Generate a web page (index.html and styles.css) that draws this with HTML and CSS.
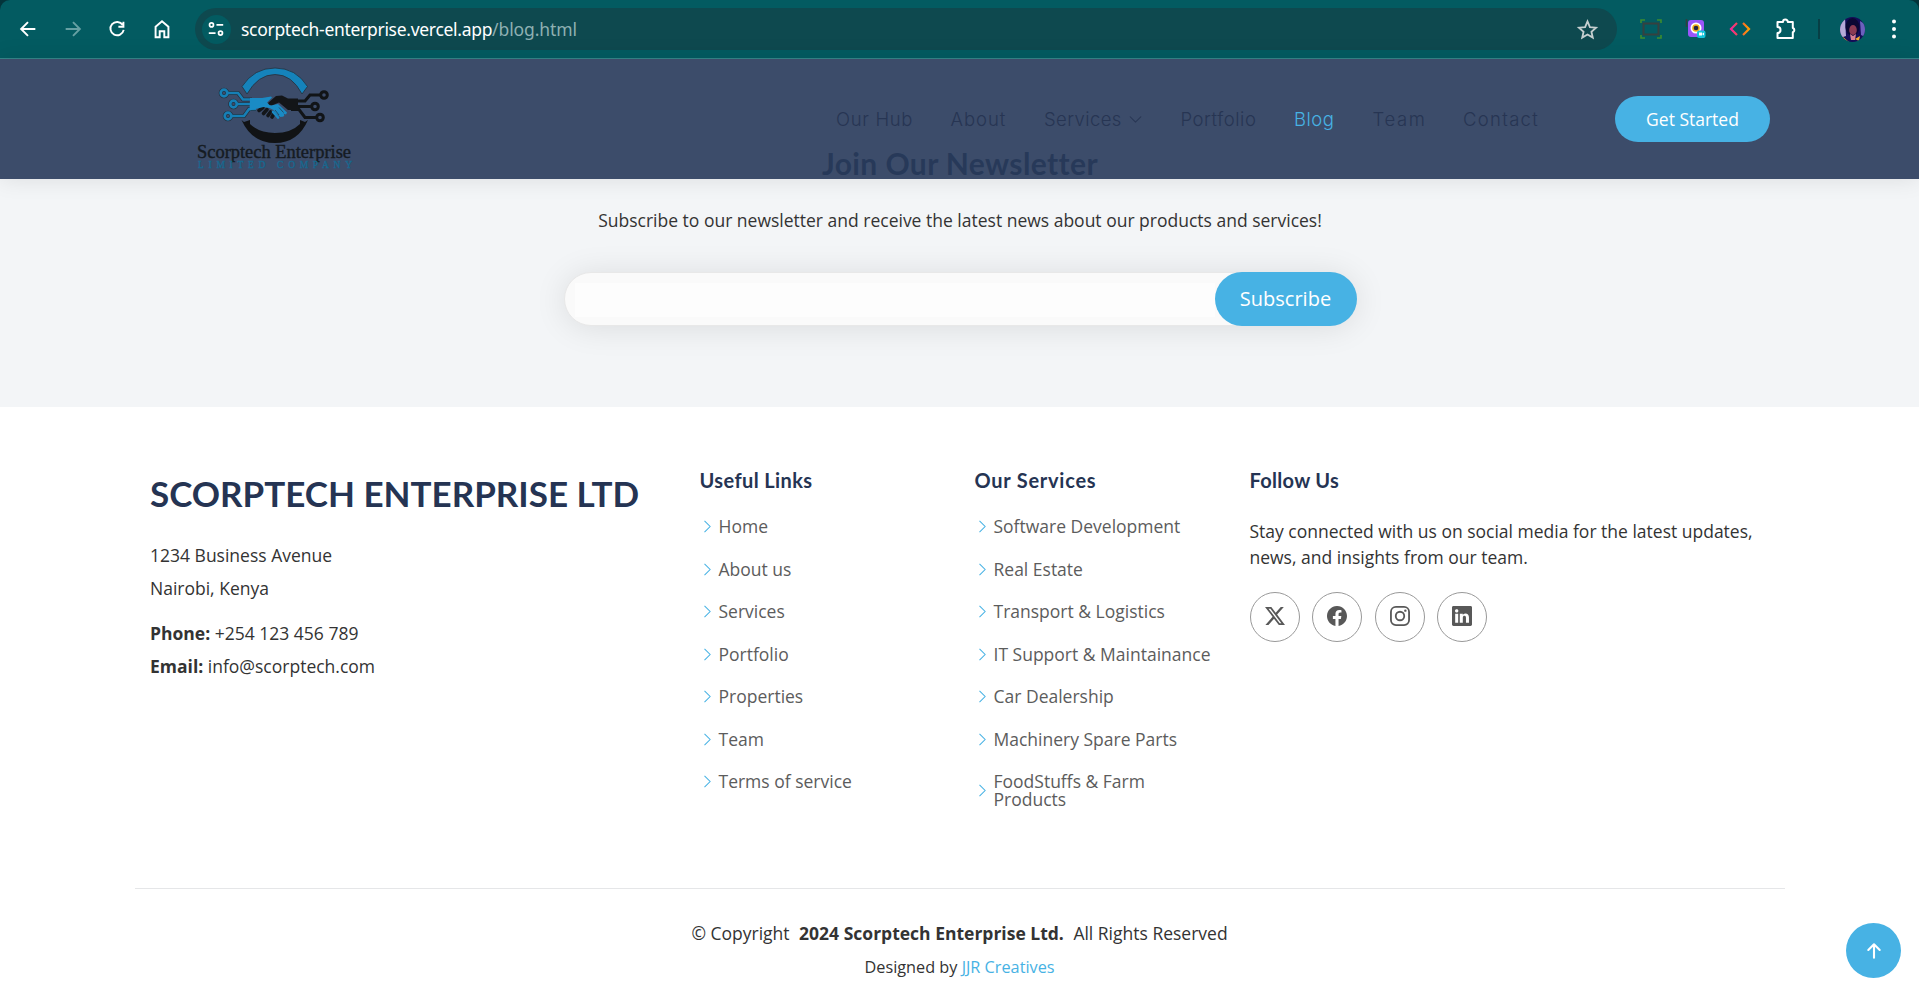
FILE: index.html
```html
<!DOCTYPE html>
<html lang="en">
<head>
<meta charset="utf-8">
<title>Scorptech Enterprise - Blog</title>
<link rel="stylesheet" href="styles.css">
</head>
<body>
<div class="browser">
  <div class="toolbar">
    <div class="nav-buttons">
      <svg viewBox="0 0 24 24"><path d="M20 12H5M12 4.500L4.500 12l7.500 7.500"/></svg>
      <svg class="dim" viewBox="0 0 24 24"><path d="M4 12h15M12 4.500l7.500 7.500-7.500 7.500"/></svg>
      <svg viewBox="0 0 24 24"><path d="M18.200 7.500A7.300 7.300 0 1 0 19.300 13M19 4v5.500h-5.500"/></svg>
      <svg viewBox="0 0 24 24"><path d="M5 9.500l7-6 7 6V21h-4.500v-6.500h-5V21H5z"/></svg>
    </div>
    <div class="omnibox">
      <span class="site-info"><svg viewBox="0 0 20 20"><circle cx="5" cy="5.500" r="2.200"/><path d="M10.500 5.500H18M2 14.500h7.500"/><circle cx="15" cy="14.500" r="2.200"/></svg></span>
      <span class="url">scorptech-enterprise.vercel.app</span><span class="path">/blog.html</span>
      <svg class="star" viewBox="0 0 24 24"><path d="M12 3.600l2.500 5.900 6.400.6-4.800 4.200 1.400 6.200L12 17.200l-5.500 3.300 1.400-6.200-4.800-4.200 6.400-.6z"/></svg>
    </div>
    <div class="extensions">
      <svg class="ext-frame" viewBox="0 0 22 22"><rect x="3.500" y="5.500" width="15" height="11" fill="none" stroke="#36413f" stroke-width="2"/><path d="M1 5V2h4M17 2h4v3M21 17v3h-4M5 20H1v-3" fill="none" stroke="#3e8d2f" stroke-width="1.600"/></svg>
      <svg class="ext-cam" viewBox="0 0 22 22"><path d="M1.500 1v8" stroke="#333c40" stroke-width="1.500"/><rect x="3" y="2" width="16" height="17" rx="3" fill="#9a56fa"/><circle cx="11" cy="10" r="5.500" fill="#fff"/><circle cx="11" cy="10" r="3.800" fill="#efac16"/><circle cx="11" cy="10" r="2.300" fill="#232443"/><rect x="12" y="12.500" width="8.500" height="7.500" rx="2" fill="#12c5dc"/><path d="M14 14.500h3v3h-3zM17 16l2-1.500v3z" fill="#fff"/></svg>
      <svg class="ext-code" viewBox="0 0 22 22"><defs><linearGradient id="codeFill"><stop offset="0" stop-color="#f5269a"/><stop offset=".5" stop-color="#f85238"/><stop offset="1" stop-color="#ff9f00"/></linearGradient></defs><path d="M8 5l-6 6 6 6M14 5l6 6-6 6" fill="none" stroke="url(#codeFill)" stroke-width="2.200"/></svg>
      <svg class="ext-puzzle" viewBox="0 0 22 22"><path d="M2.500 4H8a2.400 2.400 0 0 1 4.800 0h5v6a2.200 2.200 0 0 1 0 4.200V20H2.500v-5a3 3 0 0 0 0-6z" fill="none" stroke="#fff" stroke-width="2" stroke-linejoin="round"/></svg>
      <span class="divider"></span>
      <svg class="avatar" viewBox="0 0 25 25"><defs><clipPath id="face"><circle cx="12.500" cy="12.500" r="12.500"/></clipPath></defs><g clip-path="url(#face)"><rect width="25" height="25" fill="#150c58"/><path d="M0 5l5-4 1 18-6 2z" fill="#b6a9d8"/><path d="M20 4l5 3v13l-4-2z" fill="#6c61bd"/><ellipse cx="12.500" cy="10" rx="7" ry="9" fill="#0b0734"/><ellipse cx="13" cy="13" rx="3.800" ry="5" fill="#8c3a54"/><path d="M10 17l3 2 3-2-1 6h-4z" fill="#da7e93"/><path d="M3 20l6 5H4zM15 22l5-3-1 5z" fill="#f5aa31"/></g></svg>
      <svg class="dots" viewBox="0 0 6 22"><circle cx="3" cy="3.500" r="2"/><circle cx="3" cy="11" r="2"/><circle cx="3" cy="18.500" r="2"/></svg>
    </div>
  </div>
</div>

<header class="header">
  <svg class="logo" viewBox="0 0 156 106">
    <path d="M45 20.500Q57 2 78 2T110.500 20.500L105 28Q95 8.500 78 8.500T50 28z" fill="#1583bb" stroke="#24303c" stroke-width=".8"/>
    <path d="M44.500 54l2.500 2 6-2v4Q62 67 78 67T103 58v-4l5 2 3-2Q101 77 78 77T44.500 54z" fill="#111315"/>
    <g fill="none" stroke="#24303c" stroke-width="4">
      <circle cx="27" cy="27" r="3.300"/><circle cx="36.500" cy="38" r="3.300"/><circle cx="31" cy="50" r="3.300"/>
      <path d="M31 27h10l5 6.500h9M41 38h14M35 50h12l5-7h7"/>
    </g>
    <g fill="none" stroke="#167fb6" stroke-width="2.700">
      <circle cx="27" cy="27" r="3.300"/><circle cx="36.500" cy="38" r="3.300"/><circle cx="31" cy="50" r="3.300"/>
      <path d="M31 27h10l5 6.500h9M41 38h14M35 50h12l5-7h7"/>
    </g>
    <g fill="none" stroke="#111417" stroke-width="3">
      <circle cx="127" cy="29" r="3.300"/><circle cx="118" cy="40.500" r="3.300"/><circle cx="123" cy="51.500" r="3.300"/>
      <path d="M123 29h-10l-5 6h-9M114 40.500H99M119 51.500h-11l-6-8h-8"/>
    </g>
    <path d="M62 44.500l4-3M66.500 47.500l3.500-4M71 49.500l2.500-3.500M75 51l1.500-2.500" fill="none" stroke="#131619" stroke-width="3.600" stroke-linecap="round"/>
    <path d="M53 32h12l9-1.500 1 1-5 5 3 3 8-1.500 9 8.500-1 2-3-1 .5 3-3 .5-5-4-2-3-4-2-6-1-8 2-6 1.500z" fill="#1a8bc5"/>
    <path d="M76 46l5 5.500M82 44l4 5" fill="none" stroke="#1a8bc5" stroke-width="2.600" stroke-linecap="round"/>
    <path d="M78 44l4 5M82 41.500l4.500 5" stroke="#20465f" stroke-width=".9"/>
    <path d="M101 32.500v11.500h-10l-9-7.500-6 2.500q-4 1-5-2l8-7 6-.5 6 3z" fill="#131518"/>
    <text class="logo-name" x="0" y="91.500" textLength="154" lengthAdjust="spacingAndGlyphs">Scorptech Enterprise</text>
    <text class="logo-sub" x="1" y="102" textLength="154">LIMITED COMPANY</text>
  </svg>
  <nav class="menu">
    <a class="w-hub">Our Hub</a><a class="w-about">About</a><a class="w-services">Services<svg viewBox="0 0 16 16"><path d="M2 4.800l6 6 6-6"/></svg></a><a class="w-portfolio">Portfolio</a><a class="w-blog active">Blog</a><a class="w-team">Team</a><a class="w-contact">Contact</a>
  </nav>
  <a class="get-started">Get Started</a>
</header>

<section class="newsletter">
  <h4>Join Our Newsletter</h4>
  <p>Subscribe to our newsletter and receive the latest news about our products and services!</p>
  <form class="subscribe"><span class="field"></span><span class="submit">Subscribe</span></form>
</section>

<footer class="footer">
  <div class="columns">
    <div class="about">
      <div class="sitename"><span>SCORPTECH ENTERPRISE LTD</span></div>
      <p>1234 Business Avenue</p>
      <p>Nairobi, Kenya</p>
      <p class="phone"><strong>Phone:</strong> +254 123 456 789</p>
      <p><strong>Email:</strong> info@scorptech.com</p>
    </div>
    <div class="links">
      <h4 class="h-links">Useful Links</h4>
      <ul>
        <li><svg viewBox="0 0 16 16"><path d="M4.800 2l6 6-6 6"/></svg><a>Home</a></li>
        <li><svg viewBox="0 0 16 16"><path d="M4.800 2l6 6-6 6"/></svg><a>About us</a></li>
        <li><svg viewBox="0 0 16 16"><path d="M4.800 2l6 6-6 6"/></svg><a>Services</a></li>
        <li><svg viewBox="0 0 16 16"><path d="M4.800 2l6 6-6 6"/></svg><a>Portfolio</a></li>
        <li><svg viewBox="0 0 16 16"><path d="M4.800 2l6 6-6 6"/></svg><a>Properties</a></li>
        <li><svg viewBox="0 0 16 16"><path d="M4.800 2l6 6-6 6"/></svg><a>Team</a></li>
        <li><svg viewBox="0 0 16 16"><path d="M4.800 2l6 6-6 6"/></svg><a>Terms of service</a></li>
      </ul>
    </div>
    <div class="links">
      <h4 class="h-services">Our Services</h4>
      <ul>
        <li><svg viewBox="0 0 16 16"><path d="M4.800 2l6 6-6 6"/></svg><a>Software Development</a></li>
        <li><svg viewBox="0 0 16 16"><path d="M4.800 2l6 6-6 6"/></svg><a>Real Estate</a></li>
        <li><svg viewBox="0 0 16 16"><path d="M4.800 2l6 6-6 6"/></svg><a>Transport &amp; Logistics</a></li>
        <li><svg viewBox="0 0 16 16"><path d="M4.800 2l6 6-6 6"/></svg><a>IT Support &amp; Maintainance</a></li>
        <li><svg viewBox="0 0 16 16"><path d="M4.800 2l6 6-6 6"/></svg><a>Car Dealership</a></li>
        <li><svg viewBox="0 0 16 16"><path d="M4.800 2l6 6-6 6"/></svg><a>Machinery Spare Parts</a></li>
        <li><svg viewBox="0 0 16 16"><path d="M4.800 2l6 6-6 6"/></svg><a>FoodStuffs &amp; Farm<br>Products</a></li>
      </ul>
    </div>
    <div class="follow">
      <h4 class="h-follow">Follow Us</h4>
      <p>Stay connected with us on social media for the latest updates,<br>news, and insights from our team.</p>
      <div class="social">
        <a><svg viewBox="0 0 16 16"><path d="M12.600.75h2.454l-5.360 6.142L16 15.250h-4.937l-3.867-5.070-4.425 5.070H.316l5.733-6.570L0 .75h5.063l3.495 4.633L12.601.75Zm-.86 13.028h1.360L4.323 2.145H2.865z"/></svg></a>
        <a><svg viewBox="0 0 16 16"><path d="M16 8.049c0-4.446-3.582-8.050-8-8.050C3.580 0-.002 3.603-.002 8.050c0 4.017 2.926 7.347 6.750 7.951v-5.625h-2.030V8.050H6.750V6.275c0-2.017 1.195-3.131 3.022-3.131.876 0 1.791.157 1.791.157v1.980h-1.009c-.993 0-1.303.621-1.303 1.258v1.510h2.218l-.354 2.326H9.250V16c3.824-.604 6.750-3.934 6.750-7.951"/></svg></a>
        <a><svg viewBox="0 0 16 16"><rect x=".75" y=".75" width="14.500" height="14.500" rx="4" fill="none" stroke="#585858" stroke-width="1.450"/><circle cx="8" cy="8" r="3.400" fill="none" stroke="#585858" stroke-width="1.450"/><circle cx="12.270" cy="3.730" r=".96"/></svg></a>
        <a><svg viewBox="0 0 16 16"><path fill-rule="evenodd" d="M0 1.146C0 .513.526 0 1.175 0h13.650C15.474 0 16 .513 16 1.146v13.708c0 .633-.526 1.146-1.175 1.146H1.175C.526 16 0 15.487 0 14.854zm4.943 12.248V6.169H2.542v7.225zm-1.200-8.212c.837 0 1.358-.554 1.358-1.248-.015-.709-.520-1.248-1.342-1.248S2.400 3.225 2.400 3.934c0 .694.521 1.248 1.327 1.248zm4.908 8.212V9.359c0-.216.016-.432.080-.586.173-.431.568-.878 1.232-.878.869 0 1.216.662 1.216 1.634v3.865h2.401V9.250c0-2.220-1.184-3.252-2.764-3.252-1.274 0-1.845.7-2.165 1.193v.025h-.016l.016-.025V6.169h-2.400c.030.678 0 7.225 0 7.225z"/></svg></a>
      </div>
    </div>
  </div>
  <div class="copyright">
    <p>© Copyright <strong>2024 Scorptech Enterprise Ltd.</strong> <span>All Rights Reserved</span></p>
    <div class="credits">Designed by <a>JJR Creatives</a></div>
  </div>
</footer>
<a class="scroll-top"><svg viewBox="0 0 16 16"><path d="M8 12.500V3.700M4.200 7.300L8 3.500l3.800 3.800"/></svg></a>
</body>
</html>
```
FILE: styles.css
```css
* { box-sizing: border-box; }
body { margin: 0; height: 996px; overflow: hidden; background: #fff; color: #333; font: 17.5px/26.25px "Open Sans", sans-serif; }
h4, p, ul { margin: 0; padding: 0; }
svg { display: block; }

.browser { height: 59px; background: #04343a; }
.toolbar { display: flex; align-items: center; height: 59px; padding: 0 22px 0 17px; background: #035b61; border-bottom: 1px solid #36868a; border-radius: 10px 10px 0 0; }
.nav-buttons { display: flex; gap: 22.700px; width: 178px; }
.nav-buttons svg { width: 22px; height: 22px; fill: none; stroke: #fff; stroke-width: 2.100; }
.nav-buttons .dim { stroke: #66a0a3; }
.omnibox { display: flex; align-items: center; width: 1422px; height: 42px; padding: 0 18px 0 6.500px; border-radius: 21px; background: #0e494f; font: 17.5px/24px "Noto Sans", sans-serif; color: #fff; }
.site-info { display: flex; align-items: center; justify-content: center; width: 29px; height: 29px; margin-right: 10.500px; border-radius: 50%; background: #035b61; }
.site-info svg { width: 18px; height: 18px; fill: none; stroke: #fff; stroke-width: 1.900; }
.url { letter-spacing: -0.3px; }
.path { color: #8eb0b2; letter-spacing: -0.1px; }
.star { width: 23px; height: 23px; margin-left: auto; fill: none; stroke: #c5cfd0; stroke-width: 1.900; }
.extensions { display: flex; align-items: center; flex: 1; padding-left: 23px; }
.extensions svg { flex: none; width: 22px; height: 22px; }
.ext-cam { margin-left: 23px; }
.ext-code { margin-left: 22px; }
.ext-puzzle { margin-left: 24px; }
.divider { width: 2px; height: 20px; margin-left: 21px; background: #073f45; }
.extensions .avatar { width: 25px; height: 25px; margin-left: 20px; }
.extensions .dots { width: 6px; margin-left: auto; fill: #fff; }

.header { position: relative; z-index: 2; display: flex; align-items: center; height: 120px; padding-left: 197px; background: rgba(40, 58, 90, .9); box-shadow: 0 0 22px rgba(0, 0, 0, .1); }
.logo { flex: none; width: 156px; height: 106px; }
.logo-name { font: 18px "Liberation Serif", serif; fill: #151b22; stroke: #151b22; stroke-width: .4px; }
.logo-sub { font: 9.500px "Liberation Serif", serif; fill: #176990; stroke: #176990; stroke-width: .3px; }
.menu { display: flex; gap: 37.500px; margin-left: 483px; }
.menu a { display: flex; align-items: center; flex: none; color: #273553; font: 300 18.500px/26px Inter, sans-serif; white-space: nowrap; }
.menu svg { width: 15px; height: 15px; margin-left: 6px; fill: none; stroke: #273553; stroke-width: 1.100; }
.menu .active { color: #47b2e4; }
.w-hub { width: 77px; letter-spacing: .65px; }
.w-about { width: 56px; letter-spacing: .95px; }
.w-services { width: 99px; letter-spacing: .4px; }
.w-portfolio { width: 76px; letter-spacing: .55px; }
.w-blog { width: 41px; letter-spacing: .5px; }
.w-team { width: 53px; letter-spacing: 1.6px; }
.w-contact { width: 77px; letter-spacing: 1.300px; }
.get-started { display: flex; align-items: center; justify-content: center; width: 155px; height: 46px; margin-left: 75px; border-radius: 23px; background: #47b2e4; color: #fff; font-size: 17.5px; }

.newsletter { display: flex; flex-direction: column; align-items: center; height: 348px; margin-top: -120px; padding: 84px 0 0 1px; background: #f3f5f7; }
.newsletter h4 { height: 40px; font: bold 30px/40px Lato, sans-serif; letter-spacing: .4px; color: #253453; }
.newsletter p { margin-top: 24px; white-space: nowrap; }
.subscribe { display: flex; width: 793px; height: 54px; margin-top: 38.500px; padding: 10px 0 8px 10px; border-radius: 27px; background: #fafafa; box-shadow: 0 2px 32px rgba(0, 0, 0, .1); border: 1px solid #e8e8e8; }
.field { flex: 1; background: #fdfdfd; }
.submit { width: 142px; height: 54px; margin: -11px -1px -9px 0; border-radius: 27px; background: #47b2e4; color: #fff; font-size: 20px; line-height: 53px; text-align: center; }

.footer { display: flex; flex-direction: column; align-items: center; }
.columns { display: grid; grid-template-columns: 549.500px 275px 275px 519.500px; width: 1619px; height: 481px; padding: 60px 0 0; }
.columns h4 { height: 26px; font: bold 20px/26px Lato, sans-serif; color: #253453; }
.columns .h-links { letter-spacing: .4px; }
.columns .h-services { letter-spacing: .75px; }
.columns .h-follow { letter-spacing: .3px; }
.sitename { height: 50px; margin: 1px 0 21px; font: bold 35px/50px Lato, sans-serif; color: #253453; white-space: nowrap; }
.about p { height: 32.500px; line-height: 32.500px; }
.about .phone { margin-top: 13px; }
.links ul { padding-top: 25px; list-style: none; }
.links li { display: flex; align-items: center; margin-bottom: 25px; line-height: 17.5px; white-space: nowrap; color: #5c5c5c; }
.links svg { width: 15px; height: 15px; margin-right: 4px; fill: none; stroke: #47b2e4; stroke-width: 1.100; }
.follow p { padding-top: 25px; white-space: nowrap; }
.social { display: flex; gap: 12.500px; margin-top: 21px; }
.social a { display: flex; align-items: center; justify-content: center; width: 50px; height: 50px; padding-bottom: 2px; border: 1px solid #999; border-radius: 50%; }
.social svg { width: 20px; height: 20px; fill: #585858; }
.copyright { width: 1650px; padding-top: 31px; border-top: 1px solid #e5e6e8; text-align: center; }
.copyright strong { margin: 0 5px; }
.credits { margin-top: 8px; font-size: 16.250px; }
.credits a { color: #47b2e4; }
.scroll-top { position: fixed; right: 18px; bottom: 18px; display: flex; align-items: center; justify-content: center; width: 55px; height: 55px; border-radius: 50%; background: #47b2e4; }
.scroll-top svg { width: 24px; height: 24px; fill: none; stroke: #fff; stroke-width: 1.400; stroke-linecap: round; stroke-linejoin: round; }
```
